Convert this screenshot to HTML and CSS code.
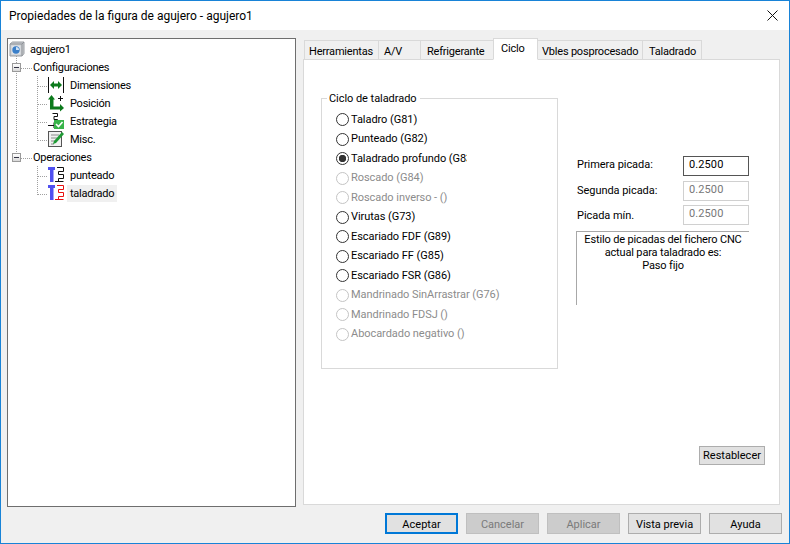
FILE: index.html
```html
<!DOCTYPE html>
<html lang="es">
<head>
<meta charset="utf-8">
<title>Propiedades de la figura de agujero - agujero1</title>
<link rel="stylesheet" href="styles.css">
</head>
<body>
<div class="window">
  <header class="titlebar">
    <span class="title">Propiedades de la figura de agujero - agujero1</span>
    <svg class="close" width="11" height="11" viewBox="0 0 11 11"><path d="M0.5 0.5 10.5 10.5M10.5 0.5 0.5 10.5" stroke="#111" fill="none"/></svg>
  </header>
  <main class="main">
    <nav class="tree">
      <svg class="tree-lines" width="60" height="170" viewBox="0 0 60 170">
        <g stroke="#a0a0a0" stroke-dasharray="1 1" fill="none" shape-rendering="crispEdges">
          <path d="M8.5 16V24M8.5 33V114M13 28.500H25M13 118.500H25M29.500 34V100.500M29.500 124V154.500M30 46.500H39M30 64.500H39M30 82.500H39M30 100.500H39M30 136.500H39M30 154.500H39"/>
        </g>
      </svg>
      <div class="row root">
        <svg class="ico" width="16" height="16" viewBox="0 0 16 16"><path d="M1 3 3.500 1H15V12.500L13 15H1Z" fill="#c9ccd0" stroke="#9a9ea3"/><path d="M1 3H13V15M13 3 15 1" fill="none" stroke="#8f9398"/><rect x="2.500" y="4.500" width="9" height="9" fill="#dfe3e8"/><circle cx="7" cy="9" r="3.700" fill="#3a7fc9"/><path d="M7 9V6A3 3 0 0 1 10 9Z" fill="#cfe2f5"/></svg>
        <span class="label">agujero1</span>
      </div>
      <div class="row branch"><span class="expander"></span><span class="label">Configuraciones</span></div>
      <div class="row leaf">
        <svg class="ico" width="16" height="16" viewBox="0 0 16 16"><path d="M.5 0V16M15.500 0V16" stroke="#111" fill="none"/><path d="M2 8 6 4V6.500H10V4L14 8 10 12V9.500H6V12Z" fill="#0c7a1c"/></svg>
        <span class="label">Dimensiones</span>
      </div>
      <div class="row leaf">
        <svg class="ico" width="16" height="16" viewBox="0 0 16 16"><path d="M3.500 0 7 4.500H5.500V11.500H12V9L16 13 12 16.500V14.500H2V4.500H0Z" fill="#0c7a1c"/><path d="M12.500 1V6M10 3.500H15" stroke="#111" fill="none"/></svg>
        <span class="label">Posición</span>
      </div>
      <div class="row leaf">
        <svg class="ico" width="16" height="16" viewBox="0 0 16 16"><path d="M4.500 .5H9.500V3.500H6V6.500H9.500V9.500H6V12.500H0M6 12.500V15" stroke="#111" fill="none"/><rect x="6" y="7" width="10" height="9" fill="#38b44a"/><path d="M8 11 10.500 13.500 14.500 9" stroke="#fff" stroke-width="1.600" fill="none"/></svg>
        <span class="label">Estrategia</span>
      </div>
      <div class="row leaf">
        <svg class="ico" width="16" height="16" viewBox="0 0 16 16"><rect x=".5" y=".5" width="13" height="15" fill="#f1f1f1" stroke="#555"/><path d="M3 4H11M3 7H9M3 10H7M3 13H6" stroke="#8a8a8a" fill="none"/><path d="M5 13 6 10 14 1 16 3 8 12Z" fill="#1f9a35"/></svg>
        <span class="label">Misc.</span>
      </div>
      <div class="row branch"><span class="expander"></span><span class="label">Operaciones</span></div>
      <div class="row leaf">
        <svg class="ico" width="16" height="16" viewBox="0 0 16 16"><path d="M0 0H7V3H5.500V15H2V3H0Z" fill="#5050f0"/><path d="M9 .5H15.500V4.500H10.500V7.500H15.500V11.500H10.500V14.500M7 14.500H15.500" stroke="#111" fill="none"/></svg>
        <span class="label">punteado</span>
      </div>
      <div class="row leaf">
        <svg class="ico" width="16" height="16" viewBox="0 0 16 16"><path d="M0 0H7V3H5.500V15H2V3H0Z" fill="#5050f0"/><path d="M9 .5H15.500V4.500H10.500V7.500H15.500V11.500H10.500V14.500M7 14.500H15.500" stroke="#e81010" fill="none"/></svg>
        <span class="label selected">taladrado</span>
      </div>
    </nav>
    <section class="pane">
      <div class="tabs">
        <span class="tab w75">Herramientas</span>
        <span class="tab w42">A/V</span>
        <span class="tab w73">Refrigerante</span>
        <span class="tab active">Ciclo</span>
        <span class="tab w105">Vbles posprocesado</span>
        <span class="tab w59">Taladrado</span>
      </div>
      <div class="panel">
        <div class="content">
          <fieldset class="group">
            <legend class="legend">Ciclo de taladrado</legend>
            <label class="radio"><input type="radio" name="c"><span class="radio-text">Taladro (G81)</span></label>
            <label class="radio"><input type="radio" name="c"><span class="radio-text">Punteado (G82)</span></label>
            <label class="radio"><input type="radio" name="c" checked><span class="radio-text">Taladrado profundo (G83)</span></label>
            <label class="radio off"><input type="radio" name="c" disabled><span class="radio-text">Roscado (G84)</span></label>
            <label class="radio off"><input type="radio" name="c" disabled><span class="radio-text">Roscado inverso - ()</span></label>
            <label class="radio"><input type="radio" name="c"><span class="radio-text">Virutas (G73)</span></label>
            <label class="radio"><input type="radio" name="c"><span class="radio-text">Escariado FDF (G89)</span></label>
            <label class="radio"><input type="radio" name="c"><span class="radio-text">Escariado FF (G85)</span></label>
            <label class="radio"><input type="radio" name="c"><span class="radio-text">Escariado FSR (G86)</span></label>
            <label class="radio off"><input type="radio" name="c" disabled><span class="radio-text">Mandrinado SinArrastrar (G76)</span></label>
            <label class="radio off"><input type="radio" name="c" disabled><span class="radio-text">Mandrinado FDSJ ()</span></label>
            <label class="radio off"><input type="radio" name="c" disabled><span class="radio-text">Abocardado negativo ()</span></label>
          </fieldset>
          <div class="side">
            <label class="field first"><span>Primera picada:</span><input class="num focus" value="0.2500"></label>
            <label class="field"><span>Segunda picada:</span><input class="num" value="0.2500" disabled></label>
            <label class="field"><span>Picada mín.</span><input class="num" value="0.2500" disabled></label>
            <div class="note">Estilo de picadas del fichero CNC<br>actual para taladrado es:<br>Paso fijo</div>
          </div>
        </div>
        <div class="panel-foot"><button class="btn reset">Restablecer</button></div>
      </div>
    </section>
  </main>
  <footer class="actions">
    <button class="btn default">Aceptar</button>
    <button class="btn" disabled>Cancelar</button>
    <button class="btn" disabled>Aplicar</button>
    <button class="btn">Vista previa</button>
    <button class="btn">Ayuda</button>
  </footer>
</div>
</body>
</html>
```
FILE: styles.css
```css
* { box-sizing: border-box; }
html, body { margin: 0; padding: 0; }
body { width: 790px; height: 544px; overflow: hidden; font: 11px/14px Roboto, "Noto Sans", sans-serif; letter-spacing: -0.05px; color: #000; }
.window { width: 790px; height: 544px; border: 1px solid #1883d7; background: #f0f0f0; display: flex; flex-direction: column; }
.titlebar { height: 29px; flex: none; background: #fff; display: flex; align-items: center; justify-content: space-between; padding: 0 11px 0 8px; }
.title { font-size: 12px; letter-spacing: 0; }
.main { display: flex; gap: 7px; padding: 8px 0 0 6px; height: 477px; flex: none; }
.tree { position: relative; width: 289px; height: 469px; background: #fff; border: 1px solid #6e6e6e; padding-top: 1px; flex: none; }
.tree-lines { position: absolute; left: 0; top: 1px; }
.row { position: relative; height: 18px; display: flex; align-items: center; }
.root { padding-left: 1px; gap: 5px; }
.branch { padding-left: 4px; gap: 3px; }
.leaf { padding-left: 40px; gap: 6px; }
.ico { flex: none; overflow: visible; }
.expander { position: relative; width: 9px; height: 9px; margin-right: 12px; border: 1px solid #9a9a9a; background: linear-gradient(#fff, #d8d8d8); flex: none; }
.expander::after { content: ""; position: absolute; left: 1px; top: 3px; width: 5px; height: 1px; background: #334; }
.branch .label { margin-left: -3px; }
.label { white-space: nowrap; background: #fff; padding-top: 2px; letter-spacing: -0.25px; }
.selected { background: #f0f0f0; margin-left: -3px; padding: 2px 3px 1px; }
.pane { width: 477px; height: 467px; display: flex; flex-direction: column; flex: none; }
.tabs { height: 22px; padding-left: 1px; display: flex; align-items: flex-end; flex: none; margin-bottom: -1px; position: relative; z-index: 1; letter-spacing: -0.2px; }
.tab { height: 20px; border: 1px solid #d9d9d9; border-left-width: 0; padding: 4px 0 0 5px; white-space: nowrap; }
.w75 { width: 75px; border-left-width: 1px; padding-left: 4px; }
.w42 { width: 42px; }
.w73 { width: 73px; padding-left: 6px; }
.w105 { width: 105px; padding-left: 4px; }
.w59 { width: 59px; padding-left: 6px; }
.active { height: 22px; width: 45px; margin-left: -1px; padding: 3px 0 0 7px; background: #fff; border-left-width: 1px; border-bottom-color: #fff; }
.panel { flex: 1; background: #fff; border: 1px solid #d9d9d9; display: flex; flex-direction: column; justify-content: space-between; }
.content { display: flex; padding: 30px 0 0 17px; }
.group { margin: 0; width: 237px; height: 279px; border: 1px solid #d9d9d9; padding: 4px 0 0 14px; min-width: 0; }
.legend { padding: 2px 3px 0 2px; margin-left: -9px; line-height: 14px; }
.radio { display: flex; align-items: center; height: 19.5px; width: 131px; overflow: hidden; white-space: nowrap; gap: 2px; }
.radio-text { flex: none; }
.radio input { appearance: none; margin: 0; width: 13px; height: 13px; border: 1px solid #333; border-radius: 50%; background: #fff; flex: none; }
.radio input:checked { background: radial-gradient(circle, #333 0 3.4px, #fff 4px); }
.off { color: #8c8c8c; width: 200px; }
.off input { border-color: #c4c4c4; }
.side { width: 173px; margin-left: 18px; padding-top: 64px; }
.field { display: flex; justify-content: space-between; align-items: center; height: 24.5px; padding-left: 1px; }
.field span { padding-top: 1px; }
.first span { padding: 0 0 2px; }
.num { width: 66px; height: 20px; border: 1px solid #d0d0d0; background: #fff; padding: 0 0 3px 5px; font: inherit; letter-spacing: 0.1px; color: #000; outline: none; }
.num:disabled { color: #777; }
.focus { border-color: #555; }
.note { margin-top: 3px; height: 74px; border-top: 1px solid #a8a8a8; border-left: 1px solid #a8a8a8; text-align: center; line-height: 13px; padding-top: 1px; letter-spacing: -0.15px; }
.panel-foot { display: flex; justify-content: flex-end; padding: 0 14px 39px 0; }
.btn { width: 73px; height: 21px; padding: 2px 0 0; border: 1px solid #adadad; background: #e1e1e1; font: inherit; color: #000; }
.btn:disabled { background: #cccccc; border-color: #bfbfbf; color: #7a7a7a; }
.default { border: 2px solid #0078d7; }
.reset { width: 66px; height: 19px; padding-top: 1px; }
.actions { display: flex; justify-content: flex-end; gap: 8px; padding: 6px 7px 0 0; }
```
